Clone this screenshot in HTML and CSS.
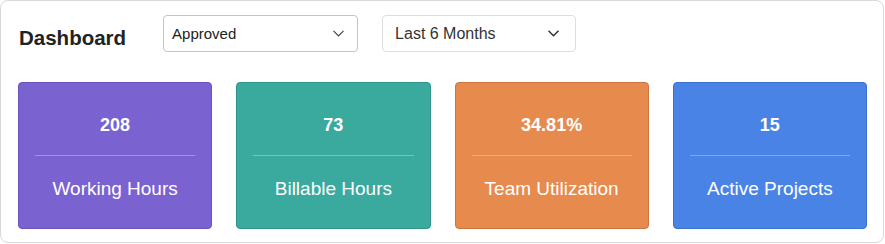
FILE: index.html
```html
<!DOCTYPE html>
<html lang="en">
  <head>
    <meta charset="utf-8" />
    <link rel="stylesheet" href="styles.css">
  </head>
  <body>
    <div class="panel">
      <div class="header">
        <h1 class="title">Dashboard</h1>
        <div class="select selectStatus">
          <span>Approved</span>
          <svg width="11" height="7" viewBox="0 0 11 7"><path d="M0.5 0.8 L5.5 5.8 L10.5 0.8" fill="none" stroke="#444" stroke-width="1.2"/></svg>
        </div>
        <div class="select selectRange">
          <span>Last 6 Months</span>
          <svg width="11" height="7" viewBox="0 0 11 7"><path d="M0.5 0.8 L5.5 5.8 L10.5 0.8" fill="none" stroke="#333" stroke-width="1.5"/></svg>
        </div>
      </div>

      <div class="cards">
        <div class="card purple">
          <div class="value">208</div>
          <div class="divider"></div>
          <div class="label">Working Hours</div>
        </div>
        <div class="card teal">
          <div class="value">73</div>
          <div class="divider"></div>
          <div class="label">Billable Hours</div>
        </div>
        <div class="card orange">
          <div class="value">34.81%</div>
          <div class="divider"></div>
          <div class="label">Team Utilization</div>
        </div>
        <div class="card blue">
          <div class="value">15</div>
          <div class="divider"></div>
          <div class="label">Active Projects</div>
        </div>
      </div>
    </div>
  </body>
</html>
```

FILE: styles.css
```css
body {
  margin: 0;
  font-family: "Liberation Sans", Arial, sans-serif;
  background: #fff;
}

.panel {
  width: 884px;
  height: 243px;
  box-sizing: border-box;
  border: 1px solid #d9d9d9;
  border-radius: 8px;
  padding: 14px 16px 0 17px;
}

.header {
  display: flex;
  align-items: flex-start;
  height: 37px;
}

.title {
  margin: 11px 37px 0 1px;
  font-size: 20.5px;
  font-weight: bold;
  color: #222;
  line-height: 24px;
}

.select {
  display: flex;
  align-items: center;
  justify-content: space-between;
  box-sizing: border-box;
  height: 37px;
  border-radius: 4px;
  background: #fff;
  color: #222;
}

.selectStatus {
  width: 195px;
  padding: 0 13px 0 8px;
  border: 1px solid #c4c4c4;
  font-size: 15px;
  margin-right: 24px;
}

.selectRange {
  width: 194px;
  padding: 0 16px 0 12px;
  border: 1px solid #dedede;
  font-size: 16px;
  color: #333;
}

.cards {
  display: grid;
  grid-template-columns: repeat(4, 1fr);
  gap: 24px;
  margin-top: 30px;
}

.card {
  box-sizing: border-box;
  height: 147px;
  border-radius: 4px;
  border: 1px solid;
  padding: 31px 16px 0 16px;
  color: #fff;
  text-align: center;
}

.value {
  font-size: 18px;
  font-weight: bold;
  line-height: 22px;
}

.divider {
  height: 1px;
  background: rgba(255, 255, 255, 0.3);
  margin-top: 19px;
}

.label {
  font-size: 19px;
  line-height: 24px;
  margin-top: 21px;
}

.purple {
  background: #7b62d1;
  border-color: #6a52bd;
}
.teal {
  background: #3aa99e;
  border-color: #2f9489;
}
.orange {
  background: #e78a4e;
  border-color: #cf7540;
}
.blue {
  background: #4a83e6;
  border-color: #3b70cf;
}
```
